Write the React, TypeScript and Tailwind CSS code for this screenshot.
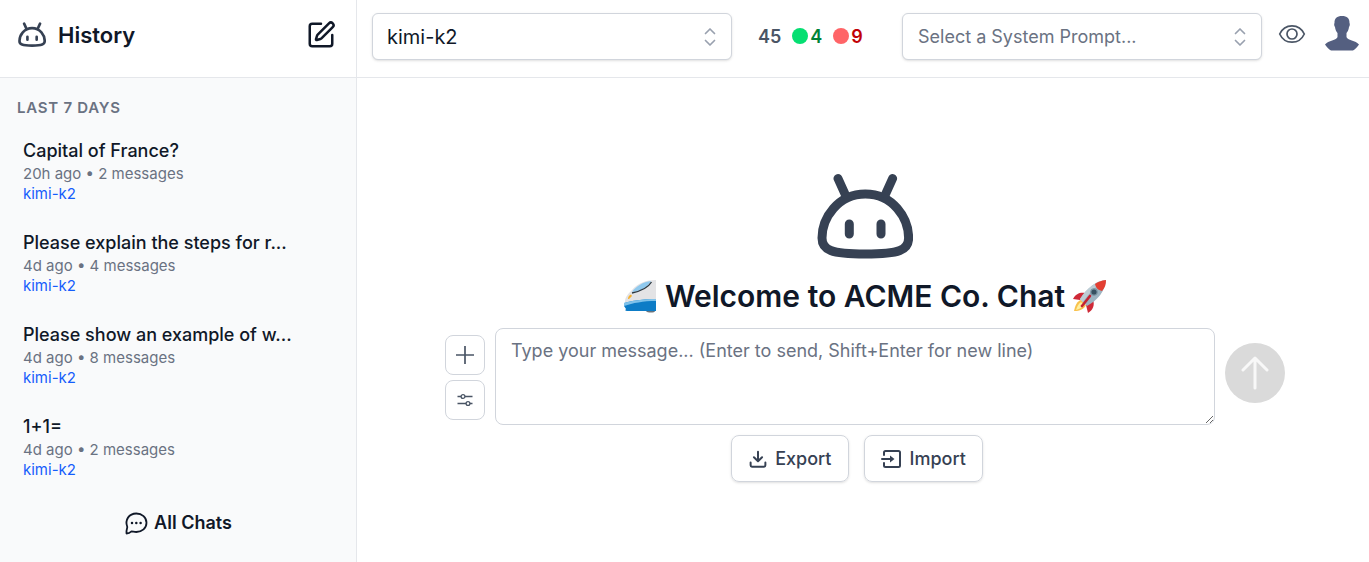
import React from "react";
import { LuSquarePen } from "react-icons/lu";

function Robot({ className }: { className: string }) {
  return (
    <svg viewBox="17 13 96 86" className={className} fill="none" stroke="currentColor" strokeWidth="9" strokeLinecap="round" aria-hidden="true">
      <path d="M65.3 34C38 34 22 58 22 78C22 90 31 94 65.3 94C99.6 94 108.6 90 108.6 78C108.6 58 93 34 65.3 34Z" />
      <path d="M38 18.5L45 34M92.6 18.5L85.6 34M49.3 64V74M81 64V74" />
    </svg>
  );
}

function UpDown() {
  return (
    <svg viewBox="0 0 20 20" className="pointer-events-none col-start-1 row-start-1 mr-3 size-5 self-center justify-self-end text-gray-400" fill="none" stroke="currentColor" strokeWidth="1.7" strokeLinecap="round" strokeLinejoin="round" aria-hidden="true">
      <path d="M5.5 6.500L10 2L14.500 6.500M5.500 13.500L10 18L14.500 13.500" />
    </svg>
  );
}

function Eye() {
  return (
    <svg viewBox="0 0 28 28" className="size-7" fill="none" stroke="currentColor" strokeWidth="1.7" aria-hidden="true">
      <path d="M1.700 14C4 9 8.500 5.800 14 5.800S24 9 26.300 14C24 19 19.500 22.200 14 22.200S4 19 1.700 14Z" />
      <circle cx="14" cy="14" r="5" />
    </svg>
  );
}

function Person() {
  return (
    <svg viewBox="0 0 34 35" className="h-[35px] w-[34px]" fill="currentColor" aria-hidden="true">
      <path d="M17 0C12 0 9.300 2.500 9.500 7C9 7.500 9 10 10 11C10.300 14 11.500 16 12.500 17V21C12 24 3 24.500 0 28.500C1.500 31 4 33.500 6 34.500H28C30 33.500 32.500 31 34 28.500C31 24.500 22 24 21.500 21V17C22.500 16 23.700 14 24 11C25 10 25 7.500 24.500 7C24.700 2.500 22 0 17 0Z" />
    </svg>
  );
}

function Train() {
  return (
    <svg viewBox="0 0 34 34" className="size-[34px]" aria-hidden="true">
      <path d="M33 1V23H2C2 18 5 15 9 11C15 4 23 1 33 1Z" fill="#e3e3e5" />
      <path d="M28 2C20 3 13 7 9 13C17 12 24 9 28 2Z" fill="#8fc9ee" />
      <path d="M9 14C18 12 25 9 28.500 3" fill="none" stroke="#2c3840" strokeWidth="1.300" />
      <path d="M1 24C8 22 20 20 33 20V32H4C2 32 2 31 3 30L1 27Z" fill="#0d7cc6" />
      <path d="M1 24C8 22 20 20 33 20V22C20 22 10 24 1 27Z" fill="#7fc2ea" />
      <path d="M5 20C5 18 6 16 8 15.500L9 17L6 20Z" fill="#f6b12f" />
      <path d="M23 32H32C32 34 24 34 23 32Z" fill="#69737c" />
    </svg>
  );
}

function Rocket() {
  return (
    <svg viewBox="0 0 34 34" className="size-[34px]" aria-hidden="true">
      <path d="M12 14C8 13 3 14 0 20L7 21ZM20 21C22 26 20 31 15 34L13 26Z" fill="#cf2937" />
      <path d="M8 21C4 22 2 27 1 32C7 32 11 30 13 26Z" fill="#f9c24c" />
      <path d="M8 23C5 25 4 28 3 31C6 30 9 29 11 26Z" fill="#fff0a0" />
      <path d="M33 1C23 2 14 9 7 20L14 27C25 21 32 12 33 1Z" fill="#9db4c1" />
      <path d="M33 1C23 2 14 9 7 20L10 23C16 14 24 6 33 1Z" fill="#bccdd5" />
      <path d="M33 1C28 1.500 25 3 22 5C23 9 25 11 29 12C32 9 33 5 33 1Z" fill="#e33f32" />
      <circle cx="21" cy="13" r="3.200" fill="#37505f" stroke="#7c96a4" strokeWidth="1.200" />
      <path d="M17 17L9 27" stroke="#c42332" strokeWidth="2.600" strokeLinecap="round" />
    </svg>
  );
}

const chats = [
  { title: "Capital of France?", meta: "20h ago • 2 messages" },
  { title: "Please explain the steps for r...", meta: "4d ago • 4 messages" },
  { title: "Please show an example of w...", meta: "4d ago • 8 messages" },
  { title: "1+1=", meta: "4d ago • 2 messages" },
];

export default function App() {
  return (
    <div className="flex min-h-screen bg-white font-['Inter',sans-serif] text-gray-900">
      <aside className="flex w-[357px] shrink-0 flex-col border-r border-gray-200 bg-gray-50">
        <header className="flex h-[78px] items-center justify-between border-b border-gray-200 bg-white pr-5 pb-2 pl-[18px]">
          <div className="flex items-center gap-3">
            <Robot className="w-7 text-gray-700" />
            <h1 className="text-[22px] leading-8 font-semibold">History</h1>
          </div>
          <button type="button" aria-label="New chat"><LuSquarePen className="size-[30px]" /></button>
        </header>
        <h2 className="px-[17px] pt-5 text-[15px] leading-5 font-semibold tracking-wider text-gray-500 uppercase">Last 7 days</h2>
        <ul className="mt-5 flex flex-col gap-[26px] px-[23px]">
          {chats.map((c) => (
            <li key={c.title}>
              <a href="#" className="block">
                <span className="block text-[18px] leading-[26px] font-medium">{c.title}</span>
                <span className="block text-[15px] leading-5 text-gray-500">{c.meta}</span>
                <span className="block text-[15px] leading-5 text-blue-600">kimi-k2</span>
              </a>
            </li>
          ))}
        </ul>
        <button type="button" className="mt-[31px] flex items-center justify-center gap-1.5 text-[18px] leading-6 font-semibold">
          <svg viewBox="0 0 24 24" className="size-6" fill="none" stroke="currentColor" strokeWidth="1.8" strokeLinecap="round" strokeLinejoin="round" aria-hidden="true">
            <path d="M2.500 22.500C2.200 20 2.900 17.500 3.300 16C.5 9 5 2.500 12.300 2.500C18 2.500 22.500 6.500 22.500 11.800S18 21 12.300 21C10 21 9 20.400 7.500 20.400C6.300 21.500 4.500 22.500 2.500 22.500Z" />
            <path d="M8 12H8.010M12.300 12H12.310M16.600 12H16.610" strokeWidth="2.500" />
          </svg>
          All Chats
        </button>
      </aside>
      <div className="flex min-w-0 flex-1 flex-col">
        <header className="flex h-[78px] items-start border-b border-gray-200 pt-[13px] pr-2.5 pl-[15px]">
          <div className="grid w-[360px]">
            <input aria-label="Model" defaultValue="kimi-k2" className="col-start-1 row-start-1 h-[47px] w-full rounded-md border border-gray-300 bg-white px-3.5 text-[20px] shadow-sm" />
            <UpDown />
          </div>
          <div className="ml-[26px] flex h-[46px] items-center text-[18px] font-semibold">
            <span className="text-gray-600">45</span>
            <span className="ml-[11px] size-4 rounded-full bg-green-400" />
            <span className="ml-0.5 text-green-700">4</span>
            <span className="ml-[11px] size-4 rounded-full bg-red-400" />
            <span className="ml-0.5 text-red-700">9</span>
          </div>
          <div className="ml-auto grid w-[360px]">
            <input aria-label="System prompt" placeholder="Select a System Prompt..." className="col-start-1 row-start-1 h-[47px] w-full rounded-md border border-gray-300 bg-white px-[15px] text-[18px] shadow-sm placeholder:text-gray-500" />
            <UpDown />
          </div>
          <button type="button" aria-label="Show system prompt" className="mt-[7px] ml-4 text-gray-600"><Eye /></button>
          <button type="button" aria-label="Account" className="mt-[3px] ml-[19px] text-[#545f80]"><Person /></button>
        </header>
        <main className="flex flex-1 flex-col items-center pt-[95px] pr-7 pl-8">
          <Robot className="w-24 text-gray-700" />
          <h2 className="mt-[17px] flex items-center gap-2 text-[30px] leading-10 font-semibold">
            <Train />
            Welcome to ACME Co. Chat
            <Rocket />
          </h2>
          <div className="mt-3 flex w-full max-w-[840px] items-center gap-2.5">
            <div className="mt-0.5 flex flex-col gap-[5px]">
              <button type="button" aria-label="Attach" className="grid size-10 place-items-center rounded-lg border border-gray-300 text-gray-600">
                <svg viewBox="0 0 20 20" className="size-5" fill="none" stroke="currentColor" strokeWidth="1.700"><path d="M10 1V19M1 10H19" /></svg>
              </button>
              <button type="button" aria-label="Settings" className="grid size-10 place-items-center rounded-lg border border-gray-300 text-gray-600">
                <svg viewBox="0 0 16 16" className="size-4" fill="none" stroke="currentColor" strokeWidth="1.300"><path d="M.5 4.500H4M8 4.500H15.500M.5 11.500H9M13 11.500H15.500" /><circle cx="6" cy="4.500" r="1.900" /><circle cx="11" cy="11.500" r="1.900" /></svg>
              </button>
            </div>
            <textarea aria-label="Message" placeholder="Type your message... (Enter to send, Shift+Enter for new line)" className="h-[97px] min-w-0 flex-1 rounded-lg border border-gray-300 px-[15px] py-2 text-[18px] leading-7 placeholder:text-gray-500" />
            <button type="button" aria-label="Send" className="mb-2 grid size-[60px] place-items-center rounded-full bg-[#dadada] text-[#f8f8f8]">
              <svg viewBox="0 0 34 34" className="size-[34px]" fill="none" stroke="currentColor" strokeWidth="3" strokeLinecap="round" strokeLinejoin="round"><path d="M17 32V2M5 14L17 2L29 14" /></svg>
            </button>
          </div>
          <div className="mt-2.5 mr-4 flex gap-[15px]">
            <button type="button" className="flex h-[47px] items-center gap-2 rounded-lg border border-gray-300 px-[17px] text-[18px] font-medium text-gray-700 shadow-sm">
              <svg viewBox="0 0 20 20" className="size-[18px]" fill="none" stroke="currentColor" strokeWidth="2.2" strokeLinecap="round" strokeLinejoin="round"><path d="M10 2V12M5.500 8L10 12.500L14.500 8M1.800 14V17Q1.800 18.500 3.300 18.500H16.700Q18.200 18.500 18.200 17V14" /></svg>
              Export
            </button>
            <button type="button" className="flex h-[47px] items-center gap-2 rounded-lg border border-gray-300 px-4 text-[18px] font-medium text-gray-700 shadow-sm">
              <svg viewBox="0 0 20 20" className="size-5" fill="none" stroke="currentColor" strokeWidth="2"><path d="M3 6V3.500Q3 2 4.500 2H17.500Q19 2 19 3.500V16.500Q19 18 17.500 18H4.500Q3 18 3 16.500V14M1 10H10" strokeLinecap="round" /><path d="M9 6.500L13.500 10L9 13.500Z" fill="currentColor" stroke="none" /></svg>
              Import
            </button>
          </div>
        </main>
      </div>
    </div>
  );
}
